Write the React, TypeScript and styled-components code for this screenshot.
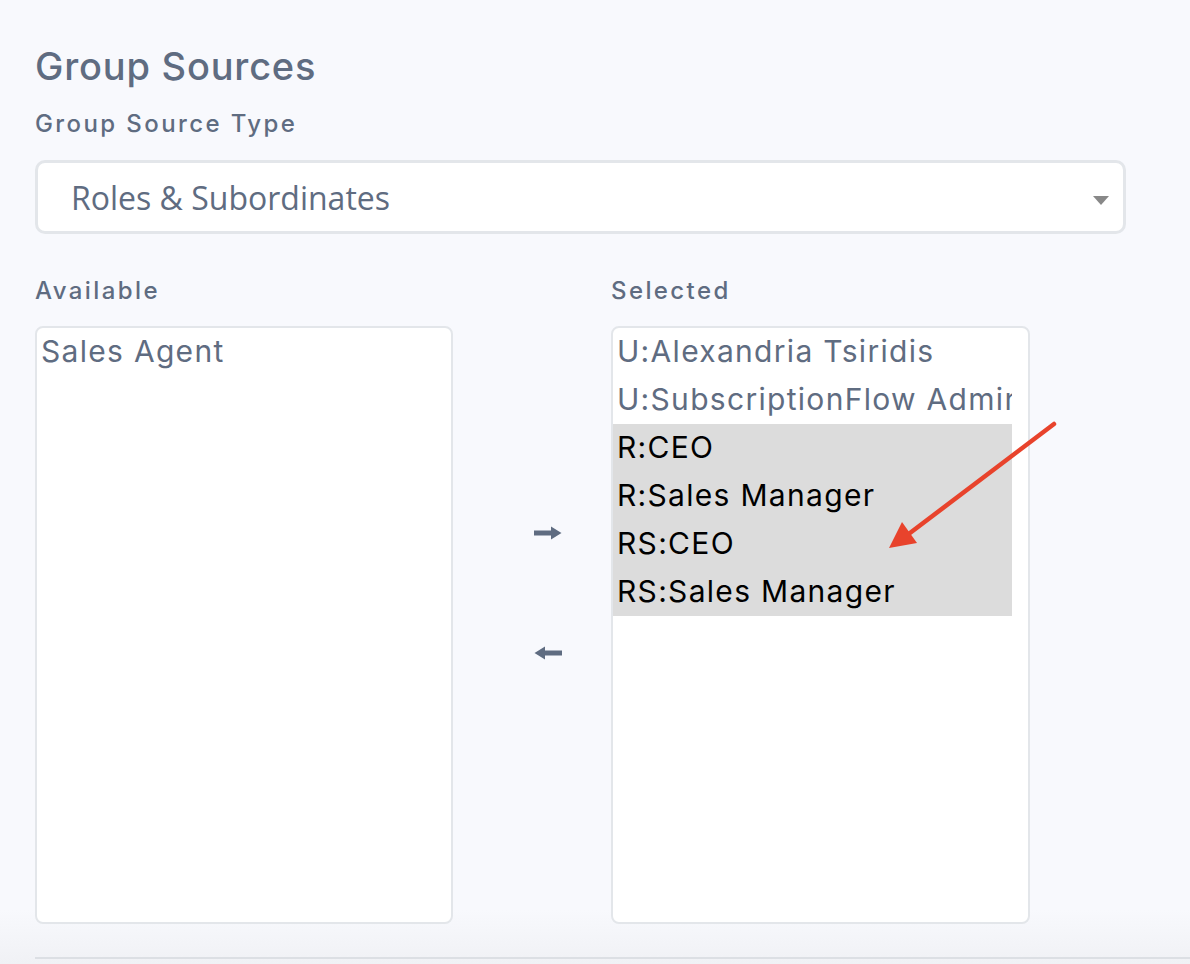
import React from 'react';
import styled, { createGlobalStyle } from 'styled-components';

// == styles =======================================================================================
const GlobalStyle = createGlobalStyle`
  html, body {
    margin: 0;
    padding: 0;
    background: #f8f9fd;
  }
  * {
    box-sizing: border-box;
  }
`;

const Colors = {
  text: '#5f6c81',
  border: '#e3e6ea',
  selected: '#dcdcdc',
  red: '#e8432c'
};

const Page = styled.div`
  position: relative;
  width: 1190px;
  height: 964px;
  overflow: hidden;
  padding: 44px 0 0 35px;
  background: linear-gradient( #f8f9fd 0, #f8f9fd 910px, #f0f1f5 964px );
  font-family: Inter, 'Noto Sans', sans-serif;
  color: ${ Colors.text };
`;

const Title = styled.h1`
  margin: 0;
  font-size: 38px;
  line-height: 44px;
  font-weight: 500;
  letter-spacing: 0.8px;
`;

const Label = styled.div`
  font-size: 24px;
  line-height: 30px;
  font-weight: 500;
  letter-spacing: 2.4px;
`;

const TypeLabel = styled( Label )`
  margin-top: 21px;
`;

const Select = styled.div`
  position: relative;
  display: flex;
  align-items: center;
  margin-top: 21px;
  width: 1091px;
  height: 74px;
  padding-left: 33px;
  background: #fff;
  border: 3px solid ${ Colors.border };
  border-radius: 10px;
  font-family: 'Open Sans', sans-serif;
  font-size: 32px;
`;

const Caret = styled.div`
  position: absolute;
  right: 14px;
  top: 33px;
  width: 0;
  height: 0;
  border-left: 8px solid transparent;
  border-right: 8px solid transparent;
  border-top: 9px solid #888;
`;

const Columns = styled.div`
  display: grid;
  grid-template-columns: 418px 158px 419px;
  margin-top: 42px;
`;

const Column = styled.div`
  display: flex;
  flex-direction: column;
`;

const ListBox = styled.div`
  margin-top: 20px;
  height: 598px;
  background: #fff;
  border: 2px solid ${ Colors.border };
  border-radius: 8px;
  padding: 0 16px 0 0;
  overflow: hidden;
`;

const Option = styled.div<{ isSelected: boolean }>`
  height: 48px;
  line-height: 46px;
  padding-left: 4px;
  white-space: nowrap;
  overflow: hidden;
  font-size: 30px;
  letter-spacing: 1.3px;
  color: ${ ( { isSelected } ) => ( isSelected ? '#000' : Colors.text ) };
  background: ${ ( { isSelected } ) => ( isSelected ? Colors.selected : 'transparent' ) };
`;

const Arrows = styled.div`
  display: flex;
  flex-direction: column;
  align-items: center;
  gap: 100px;
  padding: 247px 0 0 32px;
`;

const ArrowButton = styled.div`
  display: flex;
  align-items: center;
  justify-content: center;
  width: 30px;
  height: 20px;
`;

const Divider = styled.div`
  position: absolute;
  left: 35px;
  right: 0;
  top: 957px;
  height: 2px;
  background: #dcdfe4;
`;

const Annotation = styled.svg`
  position: absolute;
  left: 0;
  top: 0;
  pointer-events: none;
`;

// == data =========================================================================================
const available = [ { name: 'Sales Agent', selected: false } ];
const selected = [
  { name: 'U:Alexandria Tsiridis', selected: false },
  { name: 'U:SubscriptionFlow Admin', selected: false },
  { name: 'R:CEO', selected: true },
  { name: 'R:Sales Manager', selected: true },
  { name: 'RS:CEO', selected: true },
  { name: 'RS:Sales Manager', selected: true }
];

// == element ======================================================================================
const Arrow = ( { dir }: { dir: 'left' | 'right' } ): JSX.Element => (
  <svg width="30" height="16" viewBox="0 0 30 16">
    <g fill={ Colors.text } transform={ dir === 'left' ? 'translate(30 0) scale(-1 1)' : undefined }>
      <rect x="1" y="5.5" width="20" height="5" />
      <path d="M18 1.5 L28.5 8 L18 14.5 Z" />
    </g>
  </svg>
);

export default function App(): JSX.Element {
  return (
    <Page>
      <GlobalStyle />
      <Title>Group Sources</Title>
      <TypeLabel>Group Source Type</TypeLabel>
      <Select>
        Roles &amp; Subordinates
        <Caret />
      </Select>
      <Columns>
        <Column>
          <Label>Available</Label>
          <ListBox>
            { available.map( ( o ) => (
              <Option key={ o.name } isSelected={ o.selected }>{ o.name }</Option>
            ) ) }
          </ListBox>
        </Column>
        <Arrows>
          <ArrowButton><Arrow dir="right" /></ArrowButton>
          <ArrowButton><Arrow dir="left" /></ArrowButton>
        </Arrows>
        <Column>
          <Label>Selected</Label>
          <ListBox>
            { selected.map( ( o ) => (
              <Option key={ o.name } isSelected={ o.selected }>{ o.name }</Option>
            ) ) }
          </ListBox>
        </Column>
      </Columns>
      <Divider />
      <Annotation width="1190" height="964" viewBox="0 0 1190 964">
        <line x1="1054" y1="424" x2="906" y2="536" stroke={ Colors.red } strokeWidth="4.5" strokeLinecap="round" />
        <path d="M889 548 L902 522 L917 543 Z" fill={ Colors.red } />
      </Annotation>
    </Page>
  );
}
